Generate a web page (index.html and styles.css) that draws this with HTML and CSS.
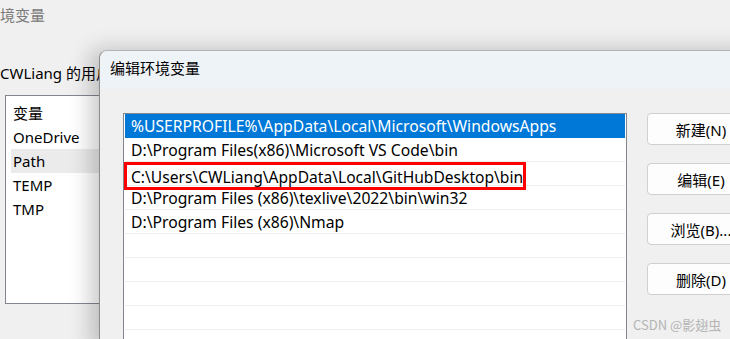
FILE: index.html
```html
<!DOCTYPE html>
<html lang="zh-CN">
<head>
  <meta charset="UTF-8" />
  <title>编辑环境变量</title>
  <link rel="stylesheet" href="styles.css">
</head>
<body>

  <!-- Background window: 环境变量 -->
  <div class="env-window">
    <div class="env-title">境变量</div>
    <div class="env-label">CWLiang 的用户变量(U)</div>
    <div class="env-list">
      <div class="env-head">变量</div>
      <div class="env-item">OneDrive</div>
      <div class="env-item active">Path</div>
      <div class="env-item">TEMP</div>
      <div class="env-item">TMP</div>
    </div>
  </div>

  <!-- Foreground dialog -->
  <div class="dialog">
    <div class="dialog-title">编辑环境变量</div>
    <div class="dialog-body">
      <div class="path-list">
        <div class="path-row selected">%USERPROFILE%\AppData\Local\Microsoft\WindowsApps</div>
        <div class="path-row">D:\Program Files(x86)\Microsoft VS Code\bin</div>
        <div class="path-row"><span class="mark">C:\Users\CWLiang\AppData\Local\GitHubDesktop\bin</span></div>
        <div class="path-row">D:\Program Files (x86)\texlive\2022\bin\win32</div>
        <div class="path-row">D:\Program Files (x86)\Nmap</div>
        <div class="path-row"></div>
        <div class="path-row"></div>
        <div class="path-row"></div>
        <div class="path-row"></div>
      </div>
      <div class="buttons">
        <button class="btn">新建(N)</button>
        <button class="btn">编辑(E)</button>
        <button class="btn">浏览(B)...</button>
        <button class="btn">删除(D)</button>
      </div>
    </div>
  </div>

  <div class="watermark">CSDN @影翅虫</div>

</body>
</html>
```

FILE: styles.css
```css
body {
  margin: 0;
  width: 730px;
  height: 339px;
  overflow: hidden;
  position: relative;
  background: #f0f0f0;
  font-family: "Noto Sans", "Noto Sans CJK SC", sans-serif;
  font-size: 15px;
  color: #000;
}

/* background window */
.env-window {
  padding-top: 4px;
}

.env-title {
  height: 22px;
  line-height: 22px;
  color: #7a7a7a;
  font-family: "Noto Sans CJK SC", sans-serif;
}

.env-label {
  margin-top: 36px;
  width: 99px;
  overflow: hidden;
  line-height: 22px;
  white-space: nowrap;
}

.env-list {
  margin: 11px 0 0 5px;
  width: 200px;
  height: 202px;
  border: 1px solid #82868f;
  background: #fff;
  padding-top: 5px;
}

.env-head,
.env-item {
  height: 24px;
  line-height: 24px;
  padding-left: 7px;
}

.env-item.active {
  margin-left: 5px;
  padding-left: 2px;
  background: #ebebeb;
}

/* dialog window */
.dialog {
  position: absolute;
  left: 99px;
  top: 50px;
  width: 660px;
  height: 300px;
  background: #f0f0f0;
  border-left: 1px solid #8c8c8c;
  border-top: 1px solid #b4b4b4;
  border-top-left-radius: 8px;
  box-shadow: -8px 0 22px rgba(0, 0, 0, 0.22);
}

.dialog-title {
  height: 38px;
  line-height: 34px;
  padding-left: 10px;
  background: #eef3f8;
  border-top-left-radius: 8px;
  font-family: "Noto Sans CJK SC", sans-serif;
}

.dialog-body {
  display: flex;
  gap: 20px;
  padding: 24px 0 0 23px;
}

.path-list {
  width: 500px;
  height: 240px;
  border: 1px solid #82868f;
  background: #fff;
  padding: 0 1px;
  font-size: 15.7px;
}

.path-row {
  height: 23px;
  line-height: 25px;
  border-bottom: 1px solid #efefef;
  padding-left: 6px;
  white-space: nowrap;
}

.path-row.selected {
  background: #0078d7;
  color: #fff;
  border-bottom-color: #0078d7;
}

.mark {
  display: block;
  width: fit-content;
  margin-left: -7px;
  padding: 0 0 0 4px;
  height: 22px;
  line-height: 24px;
  font-size: 15.6px;
  border: 3px solid #ff0000;
}

.buttons {
  display: flex;
  flex-direction: column;
  gap: 18px;
}

.btn {
  width: 108px;
  height: 32px;
  font: inherit;
  background: #fdfdfd;
  border: 1px solid #d0d0d0;
  border-radius: 4px;
  padding: 0;
  color: #000;
}

.watermark {
  position: absolute;
  left: 633px;
  top: 315px;
  font-size: 13px;
  color: #b4b4b4;
  font-family: "Noto Sans CJK SC", sans-serif;
}
```
